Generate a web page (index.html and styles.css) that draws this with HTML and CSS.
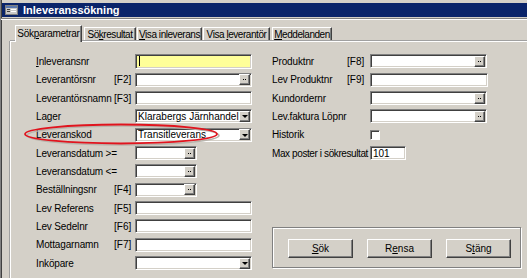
FILE: index.html
```
<html>

<head>
  <link rel="stylesheet" href="styles.css">
</head>

<body>
  <div class="window">
    <div class="titlebar">
      <svg class="appicon" width="13" height="10" viewBox="0 0 13 10">
        <rect x="0.5" y="0.5" width="12" height="9" fill="#c8c8c8" stroke="#808080" />
        <rect x="1" y="1" width="11" height="2" fill="#5a78b0" />
        <rect x="2" y="4" width="3" height="1" fill="#404040" />
        <rect x="6" y="4" width="5" height="1" fill="#ffffff" />
        <rect x="2" y="6" width="3" height="1" fill="#404040" />
        <rect x="6" y="6" width="5" height="1" fill="#ffffff" />
      </svg>
      <span class="title">Inleveranssökning</span>
    </div>
    <div class="menusep"></div>

    <div class="tabs">
      <div class="tab active">Sök<u>p</u>arametrar</div>
      <div class="tab t2">Sö<u>k</u>resultat</div>
      <div class="tab t3"><u>V</u>isa inleverans</div>
      <div class="tab t4">Visa <u>l</u>everantör</div>
      <div class="tab t5"><u>M</u>eddelanden</div>
    </div>

    <div class="panel">
      <div class="columns">
        <div class="form left">
          <span class="lbl"><u>I</u>nleveransnr</span><span class="key"></span>
          <div class="field yellow"><span class="caret"></span></div>

          <span class="lbl">Leverantörsnr</span><span class="key">[F2]</span>
          <div class="field"><span class="txt"></span><span class="dots"></span></div>

          <span class="lbl">Leverantörsnamn</span><span class="key">[F3]</span>
          <div class="field"></div>

          <span class="lbl">Lager</span><span class="key"></span>
          <div class="field"><span class="txt">Klarabergs Järnhandel</span><span class="arrow"></span></div>

          <span class="lbl">Leveranskod</span><span class="key"></span>
          <div class="field"><span class="txt">Transitleverans</span><span class="arrow"></span></div>

          <span class="lbl">Leveransdatum &gt;=</span><span class="key"></span>
          <div class="field short"><span class="txt"></span><span class="dots"></span></div>

          <span class="lbl">Leveransdatum &lt;=</span><span class="key"></span>
          <div class="field short"><span class="txt"></span><span class="dots"></span></div>

          <span class="lbl">Beställningsnr</span><span class="key">[F4]</span>
          <div class="field short"><span class="txt"></span><span class="dots"></span></div>

          <span class="lbl">Lev Referens</span><span class="key">[F5]</span>
          <div class="field"></div>

          <span class="lbl">Lev Sedelnr</span><span class="key">[F6]</span>
          <div class="field"></div>

          <span class="lbl">Mottagarnamn</span><span class="key">[F7]</span>
          <div class="field"></div>

          <span class="lbl">Inköpare</span><span class="key"></span>
          <div class="field"><span class="txt"></span><span class="arrow"></span></div>
        </div>

        <div class="rightcol">
          <div class="form right">
            <span class="lbl">Produktnr</span><span class="key">[F8]</span>
            <div class="field"><span class="txt"></span><span class="dots"></span></div>

            <span class="lbl">Lev Produktnr</span><span class="key">[F9]</span>
            <div class="field wide"></div>

            <span class="lbl">Kundordernr</span><span class="key"></span>
            <div class="field"><span class="txt"></span><span class="dots"></span></div>

            <span class="lbl">Lev.faktura Löpnr</span><span class="key"></span>
            <div class="field"><span class="txt"></span><span class="dots"></span></div>

            <span class="lbl">Historik</span><span class="key"></span>
            <div class="check"></div>

            <span class="lbl long">Max poster i sökresultat</span><span class="key"></span>
            <div class="field tiny"><span class="txt">101</span></div>
          </div>

          <div class="groupbox">
            <button class="btn"><u>S</u>ök</button>
            <button class="btn">R<u>e</u>nsa</button>
            <button class="btn">S<u>t</u>äng</button>
          </div>
        </div>
      </div>

      <svg class="mark" width="200" height="24" viewBox="0 0 200 24">
        <ellipse cx="99" cy="12.5" rx="96" ry="9.5" fill="none" stroke="#b8b4ac" stroke-width="1.5" />
        <ellipse cx="97" cy="11" rx="96" ry="9.5" fill="none" stroke="#e0141e" stroke-width="1.8" />
      </svg>
    </div>
  </div>
</body>

</html>
```

FILE: styles.css
```
body {
  margin: 0;
  padding: 0;
  background-color: #d4d0c8;
  font-family: "Liberation Sans", Arial, sans-serif;
  font-size: 10px;
  color: #000000;
  overflow: hidden;
}

.window {
  box-sizing: border-box;
  padding-top: 3px;
  border-left: 1px solid #808080;
  height: 278px;
  background-color: #d4d0c8;
  box-shadow: inset 1px 0 0 #404040;
}

.titlebar {
  height: 14px;
  margin-left: 1px;
  background-color: #0a246a;
  display: flex;
  align-items: center;
  gap: 5px;
  padding-left: 3px;
}

.title {
  color: #ffffff;
  font-weight: bold;
  font-size: 11px;
}

.menusep {
  height: 0;
  margin-top: 1px;
  border-top: 1px solid #808080;
  border-bottom: 1px solid #ffffff;
}

/* tab strip */
.tabs {
  display: flex;
  align-items: flex-end;
  margin-top: 4px;
  padding-left: 14px;
  height: 17px;
}

.tab {
  box-sizing: border-box;
  height: 14px;
  border-top: 1px solid #ffffff;
  border-left: 1px solid #ffffff;
  border-right: 1px solid #404040;
  box-shadow: inset -1px 0 0 #808080;
  line-height: 13px;
  margin-left: 1px;
  text-align: center;
  letter-spacing: -0.45px;
  white-space: nowrap;
}

.tab.active {
  width: 67px;
  height: 17px;
  line-height: 16px;
  margin-left: 0;
  position: relative;
  z-index: 1;
  margin-bottom: -1px;
  letter-spacing: -0.3px;
  background-color: #d4d0c8;
}

.t2 {
  width: 52px;
  margin-left: 2px;
}

.t3 {
  width: 65px;
}

.t4 {
  width: 67px;
}

.t5 {
  width: 60px;
  margin-left: 2px;
}

.panel {
  box-sizing: border-box;
  position: relative;
  margin-left: 9px;
  border-top: 1px solid #ffffff;
  border-left: 1px solid #ffffff;
  box-shadow: -1px 0 0 #a0a0a0, 0 -1px 0 #a0a0a0;
  height: 237px;
  padding: 10.3px 0 0 25px;
}

.columns {
  display: flex;
  gap: 20px;
}

.form {
  display: grid;
  grid-auto-rows: 18.33px;
  align-items: center;
}

.form.left {
  grid-template-columns: 78px 21px 117px;
}

.form.right {
  grid-template-columns: 75px 23px 118px;
}

.lbl,
.key {
  white-space: nowrap;
}

.lbl {
  letter-spacing: -0.15px;
}

.lbl.long {
  letter-spacing: -0.4px;
}

.field {
  box-sizing: border-box;
  width: 117px;
  height: 14px;
  background-color: #ffffff;
  border-top: 1px solid #808080;
  border-left: 1px solid #808080;
  border-right: 1px solid #ffffff;
  border-bottom: 1px solid #ffffff;
  box-shadow: inset 1px 1px 0 #404040, inset -1px -1px 0 #d4d0c8;
  display: flex;
  align-items: center;
  justify-content: space-between;
  padding: 1px 1px 1px 2px;
  overflow: hidden;
}

.field.short {
  width: 62px;
}

.field.wide {
  width: 118px;
}

.field.tiny {
  width: 36px;
}

.field.yellow {
  height: 15px;
  background-color: #ffff99;
  justify-content: flex-start;
}

.caret {
  width: 1px;
  height: 10px;
  margin-left: 1px;
  background-color: #000000;
}

.txt {
  line-height: 11px;
  white-space: nowrap;
  overflow: hidden;
  min-width: 0;
}

.dots,
.arrow {
  box-sizing: border-box;
  width: 11px;
  height: 11px;
  flex-shrink: 0;
  background-color: #d4d0c8;
  border-top: 1px solid #ffffff;
  border-left: 1px solid #ffffff;
  border-right: 1px solid #404040;
  border-bottom: 1px solid #404040;
  box-shadow: inset -1px -1px 0 #808080;
  display: flex;
  align-items: center;
  justify-content: center;
}

.dots::after {
  content: "";
  width: 1px;
  height: 1px;
  margin-right: 2px;
  background-color: #000000;
  box-shadow: 2px 0 0 #000000;
}

.arrow::after {
  content: "";
  border-left: 3px solid transparent;
  border-right: 3px solid transparent;
  border-top: 3px solid #000000;
  margin-top: 1px;
}

.check {
  box-sizing: border-box;
  width: 10px;
  height: 10px;
  margin-top: 1px;
  background-color: #ffffff;
  border-top: 1px solid #808080;
  border-left: 1px solid #808080;
  border-right: 1px solid #ffffff;
  border-bottom: 1px solid #ffffff;
  box-shadow: inset 1px 1px 0 #404040;
}

.rightcol {
  display: flex;
  flex-direction: column;
}

.groupbox {
  margin-top: 65px;
  width: 249px;
  height: 41px;
  box-sizing: border-box;
  border: 1px solid #808080;
  box-shadow: inset 1px 1px 0 #ffffff, 1px 1px 0 #ffffff;
  display: flex;
  align-items: center;
  padding-left: 15px;
  gap: 14px;
}

.btn {
  box-sizing: border-box;
  width: 65px;
  height: 19px;
  margin-top: 2px;
  padding: 0;
  font-family: "Liberation Sans", Arial, sans-serif;
  font-size: 10px;
  color: #000000;
  background-color: #d4d0c8;
  border-top: 1px solid #ffffff;
  border-left: 1px solid #ffffff;
  border-right: 1px solid #404040;
  border-bottom: 1px solid #404040;
  box-shadow: inset -1px -1px 0 #808080;
}

.mark {
  position: absolute;
  left: 13px;
  top: 81px;
}
```
